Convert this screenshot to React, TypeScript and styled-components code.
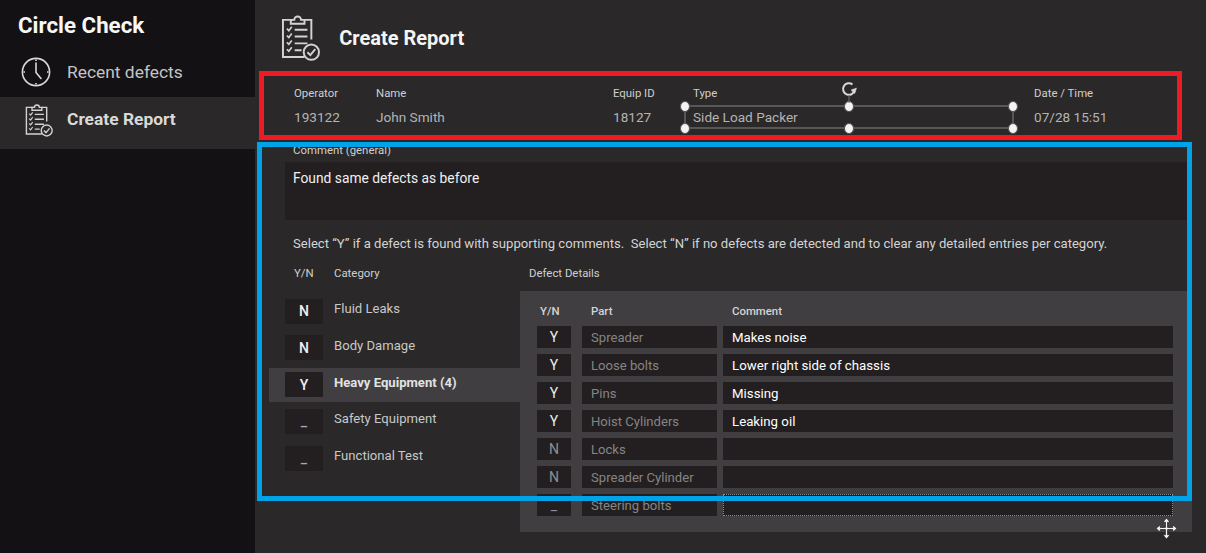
import * as React from 'react';
import styled, { createGlobalStyle } from 'styled-components';

const GlobalStyle = createGlobalStyle`
    html, body {
        margin: 0;
        padding: 0;
        background: #2a2828;
    }

    body {
        font-family: Roboto, "Liberation Sans", sans-serif;
        overflow: hidden;
    }
`;

const Page = styled.div`
    position: relative;
    display: flex;
    width: 1206px;
    height: 553px;
    overflow: hidden;
    background: #2a2828;
`;

const Sidebar = styled.nav`
    flex: 0 0 255px;
    background: #141114;
`;

const Brand = styled.div`
    height: 48px;
    padding: 11px 0 0 18px;
    box-sizing: border-box;
    font-size: 22.3px;
    line-height: 28px;
    font-weight: 700;
    color: #f7f7f7;
`;

const NavItem = styled.div<{ $active?: boolean }>`
    display: flex;
    align-items: center;
    height: ${p => (p.$active ? '52px' : '49px')};
    padding-left: ${p => (p.$active ? '25px' : '20px')};
    padding-bottom: ${p => (p.$active ? '8px' : '1px')};
    box-sizing: border-box;
    background: ${p => (p.$active ? '#2a2828' : 'transparent')};
    color: ${p => (p.$active ? '#d9d9d9' : '#c4c4c4')};
    font-size: 17.4px;
    font-weight: ${p => (p.$active ? 700 : 400)};
`;

const NavIcon = styled.span<{ $active?: boolean }>`
    display: flex;
    justify-content: center;
    width: ${p => (p.$active ? '28px' : '31px')};
    margin-right: ${p => (p.$active ? '14px' : '16px')};
    margin-top: ${p => (p.$active ? '2px' : '0')};
`;

const Main = styled.main`
    flex: 1;
    min-width: 0;
    display: flex;
    flex-direction: column;
    padding-right: 14px;
`;

const Header = styled.header`
    display: flex;
    align-items: center;
    height: 71px;
    padding: 4px 0 0 26px;
    box-sizing: border-box;
`;

const Title = styled.h1`
    margin: 0 0 0 19px;
    font-size: 20px;
    font-weight: 700;
    color: #f5f5f5;
`;

const InfoRow = styled.section`
    display: grid;
    grid-template-columns: 82px 237px 80px 341px 1fr;
    height: 72px;
    padding: 14px 0 0 39px;
    box-sizing: border-box;
`;

const Field = styled.div`
    position: relative;
`;

const FieldLabel = styled.div`
    font-size: 11.4px;
    line-height: 16px;
    color: #cfcfcf;
`;

const FieldValue = styled.div`
    margin-top: 8px;
    font-size: 13.6px;
    line-height: 17px;
    color: #b4b4b4;
`;

const Selection = styled.div`
    position: absolute;
    left: -8px;
    top: 21px;
    width: 328px;
    height: 22px;
    box-shadow: 0 0 0 1px #575757, inset 0 0 0 1px #575757;
`;

const Handle = styled.i<{ $x: number; $y: number }>`
    position: absolute;
    left: ${p => p.$x * 100}%;
    top: ${p => p.$y * 100}%;
    width: 10px;
    height: 11px;
    margin: -5.5px 0 0 -5px;
    border-radius: 50%;
    background: #f4f4f4;
    border: 1px solid #555;
    box-sizing: border-box;
`;

const RotateHandle = styled.svg`
    position: absolute;
    left: 50%;
    top: -25px;
    margin-left: -8px;
`;

const CommentBlock = styled.section`
    padding-left: 30px;
`;

const CommentLabel = styled.div`
    padding-left: 8px;
    font-size: 11.4px;
    line-height: 16px;
    color: #cfcfcf;
    margin-top: -1px;
`;

const CommentBox = styled.div`
    height: 58px;
    margin-top: 4px;
    padding: 7px 8px;
    box-sizing: border-box;
    background: #231f20;
    font-size: 13.8px;
    line-height: 18px;
    color: #f0f0f0;
`;

const Hint = styled.p`
    margin: 15px 0 0 38px;
    font-size: 13.1px;
    line-height: 17px;
    color: #d4d4d4;
    white-space: pre;
`;

const Columns = styled.div`
    display: grid;
    grid-template-columns: 251px 1fr;
    margin: 13px 0 0 14px;
`;

const CategoryHead = styled.div`
    display: flex;
    height: 26px;
    padding-left: 25px;
    font-size: 11.4px;
    line-height: 16px;
    color: #cfcfcf;
    span:first-child {
        width: 40px;
    }
`;

const CategoryList = styled.div`
    display: flex;
    flex-direction: column;
    gap: 2.75px;
    margin-top: 3px;
`;

const CategoryRow = styled.div<{ $active?: boolean }>`
    display: flex;
    align-items: center;
    height: 34px;
    padding-left: 16px;
    background: ${p => (p.$active ? '#403e41' : 'transparent')};
`;

const YnBox = styled.div<{ $strong?: boolean }>`
    display: flex;
    align-items: center;
    justify-content: center;
    width: 38px;
    height: 25px;
    background: #231f20;
    font-size: 14px;
    font-weight: 500;
    color: ${p => (p.$strong ? '#f0f0f0' : '#a9a9a9')};
`;

const CategoryName = styled.span<{ $active?: boolean }>`
    margin: -5px 0 0 11px;
    font-size: 13.1px;
    font-weight: ${p => (p.$active ? 700 : 400)};
    color: ${p => (p.$active ? '#e2e2e2' : '#c8c8c8')};
`;

const DetailsTitle = styled.div`
    height: 26px;
    padding-left: 9px;
    font-size: 11.4px;
    line-height: 16px;
    color: #cfcfcf;
`;

const Panel = styled.div`
    height: 241px;
    padding: 13px 19px 0 17px;
    box-sizing: border-box;
    background: #403e41;
`;

const DetailGrid = styled.div`
    display: grid;
    grid-template-columns: 45px 141px 450px;
    grid-template-rows: 16px;
    grid-auto-rows: 22px;
    row-gap: 6px;
`;

const DetailGridRow = styled.div`
    display: contents;
`;

const ColHead = styled.div<{ $indent: number }>`
    padding-left: ${p => p.$indent}px;
    margin-top: -1px;
    font-size: 11.4px;
    line-height: 16px;
    font-weight: 500;
    color: #d4d4d4;
`;

const Cell = styled.div`
    display: flex;
    align-items: center;
    background: #231f20;
    font-size: 13.1px;
`;

const YnCell = styled(Cell)<{ $on?: boolean }>`
    justify-content: center;
    margin-right: 11px;
    font-size: 14px;
    color: ${p => (p.$on ? '#eeeeee' : '#8f8f8f')};
`;

const PartCell = styled(Cell)`
    margin-right: 6px;
    padding-left: 9px;
    color: #858585;
    white-space: nowrap;
`;

const CommentCell = styled(Cell)<{ $focused?: boolean }>`
    padding-left: 9px;
    font-size: 13.25px;
    color: #ffffff;
    box-sizing: border-box;
    border: ${p => (p.$focused ? '1px dotted #8a8a8a' : 'none')};
`;

const Annotation = styled.div<{ $x: number; $y: number; $w: number; $h: number; $color: string }>`
    position: absolute;
    left: ${p => p.$x}px;
    top: ${p => p.$y}px;
    width: ${p => p.$w}px;
    height: ${p => p.$h}px;
    box-sizing: border-box;
    border: 5px solid ${p => p.$color};
    pointer-events: none;
`;

const MoveCursor = styled.svg`
    position: absolute;
    left: 1156px;
    top: 518px;
`;

function ClipboardIcon({ size }: { size: number }) {
    const stroke = '#d6d2d2';
    return (
        <svg width={(size * 40) / 48} height={size} viewBox="0 0 40 48" fill="none" stroke={stroke} strokeWidth="2">
            <path d="M12 6H2v38h22" />
            <path d="M24 6h7v20" />
            <path d="M10 10V6h3.500a3.500 3.500 0 0 1 7 0H24v4z" />
            <path d="M6 15l2 2 3-4M6 22l2 2 3-4M6 29l2 2 3-4M6 36l2 2 3-4" strokeWidth="1.7" />
            <path d="M14 16h13M14 23h13M14 30h13M14 37h7" />
            <circle cx="31" cy="39" r="7.8" fill="#2a2828" />
            <path d="M27 39l3 3 5-6" />
        </svg>
    );
}

function ClockIcon() {
    return (
        <svg width="30" height="30" viewBox="0 0 30 30" fill="none" stroke="#d8d8d8" strokeWidth="1.6">
            <circle cx="15" cy="15" r="13.6" />
            <path d="M15 6v9.500l5 6" strokeLinecap="round" />
            <path d="M15 2.500v1.500M15 26v1.500M2.500 15H4M26 15h1.500" />
        </svg>
    );
}

const categories = [
    { yn: 'N', name: 'Fluid Leaks', strong: true },
    { yn: 'N', name: 'Body Damage', strong: true },
    { yn: 'Y', name: 'Heavy Equipment (4)', strong: true, active: true },
    { yn: '_', name: 'Safety Equipment' },
    { yn: '_', name: 'Functional Test' }
];

const details = [
    { yn: 'Y', part: 'Spreader', comment: 'Makes noise' },
    { yn: 'Y', part: 'Loose bolts', comment: 'Lower right side of chassis' },
    { yn: 'Y', part: 'Pins', comment: 'Missing' },
    { yn: 'Y', part: 'Hoist Cylinders', comment: 'Leaking oil' },
    { yn: 'N', part: 'Locks', comment: '' },
    { yn: 'N', part: 'Spreader Cylinder', comment: '' },
    { yn: '_', part: 'Steering bolts', comment: '', focused: true }
];

const handles = [[0, 0], [0.5, 0], [1, 0], [0, 1], [0.5, 1], [1, 1]];

const hint = 'Select “Y” if a defect is found with supporting comments.  Select “N” if no defects are detected and to clear any detailed entries per category.';

export default function App() {
    return (
        <Page>
            <GlobalStyle />
            <Sidebar>
                <Brand>Circle Check</Brand>
                <NavItem>
                    <NavIcon><ClockIcon /></NavIcon>
                    Recent defects
                </NavItem>
                <NavItem $active>
                    <NavIcon $active><ClipboardIcon size={34} /></NavIcon>
                    Create Report
                </NavItem>
            </Sidebar>
            <Main>
                <Header>
                    <ClipboardIcon size={47} />
                    <Title>Create Report</Title>
                </Header>
                <InfoRow>
                    <Field>
                        <FieldLabel>Operator</FieldLabel>
                        <FieldValue>193122</FieldValue>
                    </Field>
                    <Field>
                        <FieldLabel>Name</FieldLabel>
                        <FieldValue>John Smith</FieldValue>
                    </Field>
                    <Field>
                        <FieldLabel>Equip ID</FieldLabel>
                        <FieldValue>18127</FieldValue>
                    </Field>
                    <Field>
                        <FieldLabel>Type</FieldLabel>
                        <FieldValue>Side Load Packer</FieldValue>
                        <Selection>
                            {handles.map(([x, y]) => <Handle key={`${x}-${y}`} $x={x} $y={y} />)}
                            <RotateHandle width="16" height="22" viewBox="0 0 16 22" fill="none" stroke="#d8d8d8" strokeWidth="2">
                                <path d="M11.500 3.500A5.800 5.800 0 1 0 13.500 9.500" />
                                <path d="M10 9l3.800 3.500L15.500 7z" fill="#d8d8d8" strokeWidth="0.5" />
                                <path d="M8 14v8" strokeWidth="1" stroke="#777" />
                            </RotateHandle>
                        </Selection>
                    </Field>
                    <Field>
                        <FieldLabel>Date / Time</FieldLabel>
                        <FieldValue>07/28 15:51</FieldValue>
                    </Field>
                </InfoRow>
                <CommentBlock>
                    <CommentLabel>Comment (general)</CommentLabel>
                    <CommentBox>Found same defects as before</CommentBox>
                </CommentBlock>
                <Hint>{hint}</Hint>
                <Columns>
                    <div>
                        <CategoryHead>
                            <span>Y/N</span>
                            <span>Category</span>
                        </CategoryHead>
                        <CategoryList>
                            {categories.map(c => (
                                <CategoryRow key={c.name} $active={c.active}>
                                    <YnBox $strong={c.strong}>{c.yn}</YnBox>
                                    <CategoryName $active={c.active}>{c.name}</CategoryName>
                                </CategoryRow>
                            ))}
                        </CategoryList>
                    </div>
                    <div>
                        <DetailsTitle>Defect Details</DetailsTitle>
                        <Panel>
                            <DetailGrid>
                                <ColHead $indent={3}>Y/N</ColHead>
                                <ColHead $indent={9}>Part</ColHead>
                                <ColHead $indent={9}>Comment</ColHead>
                                {details.map(d => (
                                    <DetailGridRow key={d.part}>
                                        <YnCell $on={d.yn === 'Y'}>{d.yn}</YnCell>
                                        <PartCell>{d.part}</PartCell>
                                        <CommentCell $focused={d.focused}>{d.comment}</CommentCell>
                                    </DetailGridRow>
                                ))}
                            </DetailGrid>
                        </Panel>
                    </div>
                </Columns>
            </Main>
            <Annotation $x={259} $y={71} $w={923} $h={69} $color="#ed1c24" />
            <Annotation $x={257} $y={142} $w={935} $h={359} $color="#00a2e8" />
            <MoveCursor width="21" height="21" viewBox="0 0 20 20" fill="#f4f4f4" stroke="#222" strokeWidth="0.7">
                <path d="M10 0l3.500 4h-2.500v5h5V6.500L20 10l-4 3.500V11h-5v5h2.500L10 20l-3.500-4H9v-5H4v2.500L0 10l4-3.500V9h5V4H6.500z" />
            </MoveCursor>
        </Page>
    );
}
